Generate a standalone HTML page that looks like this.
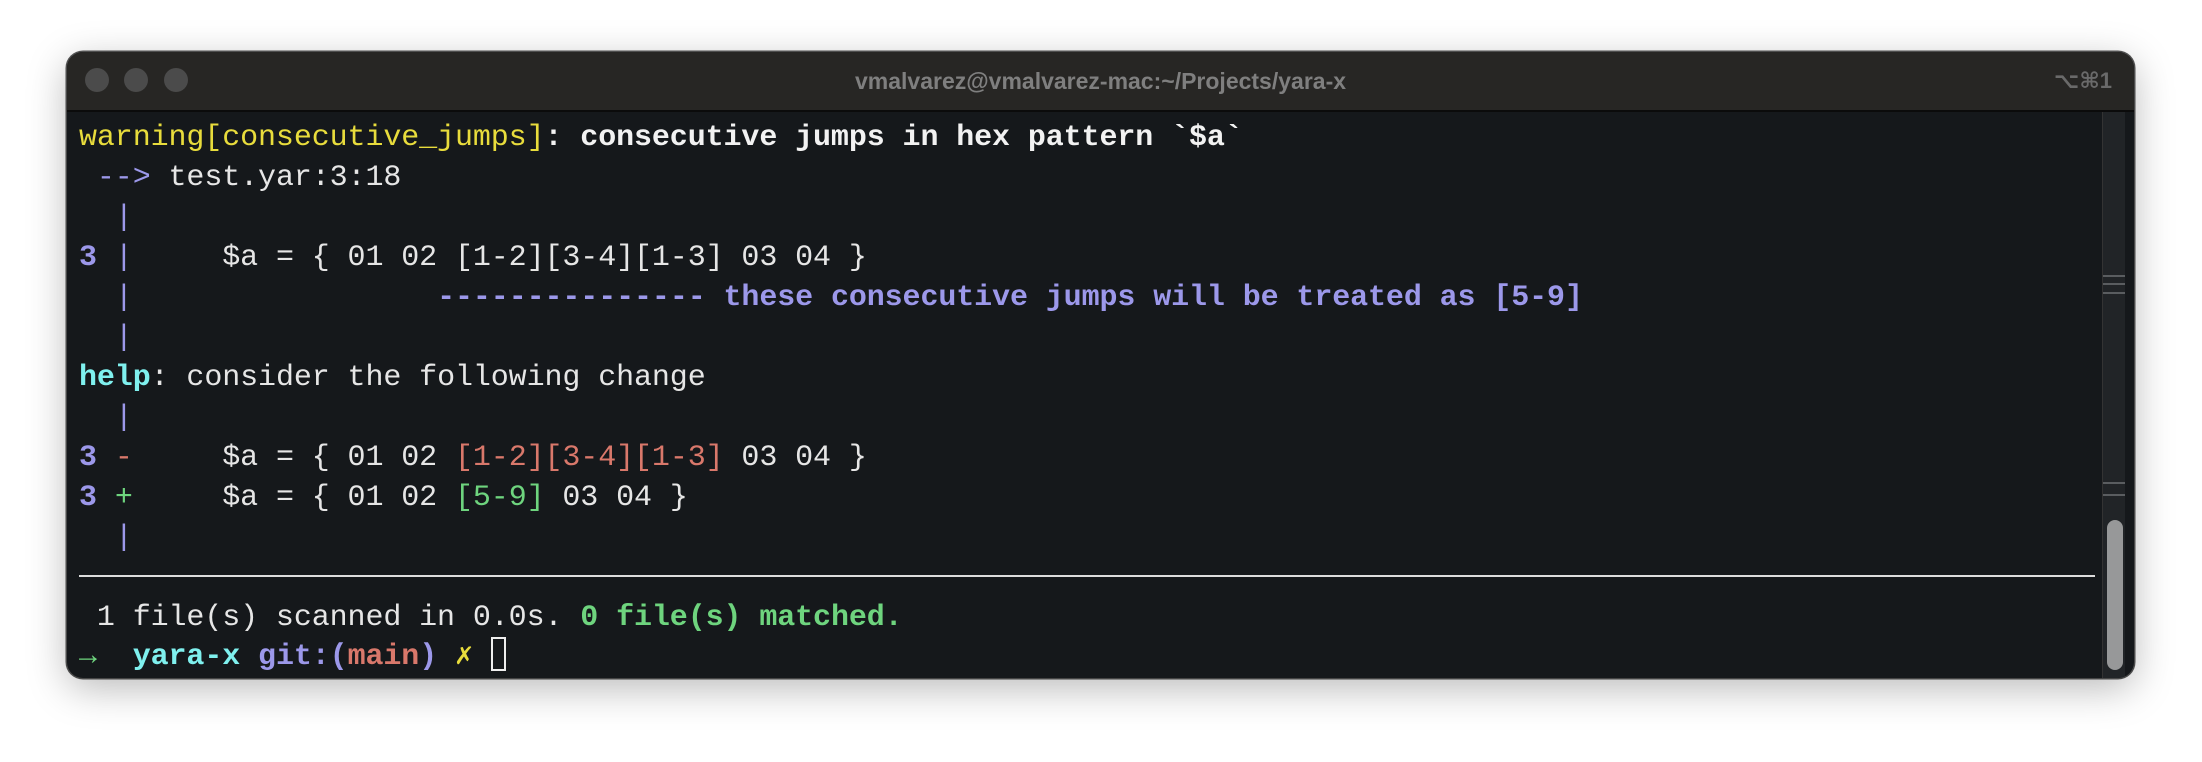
<!DOCTYPE html>
<html><head><meta charset="utf-8"><style>
html,body{margin:0;padding:0;background:#fff;width:2202px;height:762px;overflow:hidden}
.win{position:absolute;left:67px;top:52px;width:2067px;height:626px;border-radius:16px;background:#15181b;box-shadow:0 10px 40px rgba(0,0,0,.28),0 0 0 1.5px #555;overflow:hidden}
.tb{position:absolute;left:0;top:0;width:100%;height:58px;background:#272624;border-bottom:2px solid #0b0b0b}
.dot{position:absolute;top:16px;width:24px;height:24px;border-radius:50%;background:#4b4b4b}
.title{position:absolute;left:0;width:100%;top:0;font:bold 23px "Liberation Sans",sans-serif;line-height:58px;text-align:center;color:#7f7f7f}
.kb{position:absolute;right:22px;top:0;font:bold 22px "Liberation Sans","DejaVu Sans",sans-serif;line-height:58px;color:#6a6a6a}
.ln{position:absolute;left:12px;height:40px;line-height:40px;white-space:pre;font-family:"Liberation Mono",monospace;font-size:30px;letter-spacing:-0.1px;color:#e6e6e6;margin-top:3px}
.y{color:#e8dc3c}.w{color:#f2f2f2;font-weight:bold}.p{color:#9c98ea}.pb{color:#9c98ea;font-weight:bold}.c{color:#7ff0ee}.cb{color:#7ff0ee;font-weight:bold}.r{color:#d9786b}.g{color:#6ed47e}.gb{color:#6ed47e;font-weight:bold}
.sb{position:absolute;left:2035px;top:60px;width:22px;height:566px;background:#212427;border-left:1px solid #333}
.mk{position:absolute;left:0;width:22px;height:2px;background:#5a5d60}
.thumb{position:absolute;left:4px;top:408px;width:16px;height:150px;border-radius:8px;background:#979899}
.sep{position:absolute;left:12px;top:523px;width:2016px;height:2px;background:#dcdcdc}
.cur{display:inline-block;width:15px;height:34px;border:2px solid #eee;vertical-align:middle;box-sizing:border-box;margin-top:-4px}
</style></head><body>
<div class="win">
<div class="tb">
<div class="dot" style="left:18px"></div><div class="dot" style="left:57px"></div><div class="dot" style="left:97px"></div>
<div class="title">vmalvarez@vmalvarez-mac:~/Projects/yara-x</div>
<div class="kb">⌥⌘1</div>
</div>
<div class="ln" style="top:63px"><span class="y">warning[consecutive_jumps]</span><span class="w">: consecutive jumps in hex pattern `$a`</span></div>
<div class="ln" style="top:103px"> <span class="p">--&gt;</span> test.yar:3:18</div>
<div class="ln" style="top:143px">  <span class="p">|</span></div>
<div class="ln" style="top:183px"><span class="pb">3</span> <span class="p">|</span>     $a = { 01 02 [1-2][3-4][1-3] 03 04 }</div>
<div class="ln" style="top:223px">  <span class="p">|</span>                 <span class="pb">--------------- these consecutive jumps will be treated as [5-9]</span></div>
<div class="ln" style="top:263px">  <span class="p">|</span></div>
<div class="ln" style="top:303px"><span class="cb">help</span>: consider the following change</div>
<div class="ln" style="top:343px">  <span class="p">|</span></div>
<div class="ln" style="top:383px"><span class="pb">3</span> <span class="r">-</span>     $a = { 01 02 <span class="r">[1-2][3-4][1-3]</span> 03 04 }</div>
<div class="ln" style="top:423px"><span class="pb">3</span> <span class="g">+</span>     $a = { 01 02 <span class="g">[5-9]</span> 03 04 }</div>
<div class="ln" style="top:463px">  <span class="p">|</span></div>
<div class="sep"></div>
<div class="ln" style="top:543px"> 1 file(s) scanned in 0.0s. <span class="gb">0 file(s) matched.</span></div>
<div class="ln" style="top:582px"><span class="gb">→</span>  <span class="cb">yara-x</span> <span class="pb">git:(</span><span class="r" style="font-weight:bold">main</span><span class="pb">)</span> <span class="y" style="font-weight:bold">✗</span> <span class="cur"></span></div>
<div class="sb">
<div class="mk" style="top:163px"></div><div class="mk" style="top:171px"></div><div class="mk" style="top:180px"></div>
<div class="mk" style="top:370px"></div><div class="mk" style="top:382px"></div>
<div class="thumb"></div>
</div>
</div>
</body></html>
